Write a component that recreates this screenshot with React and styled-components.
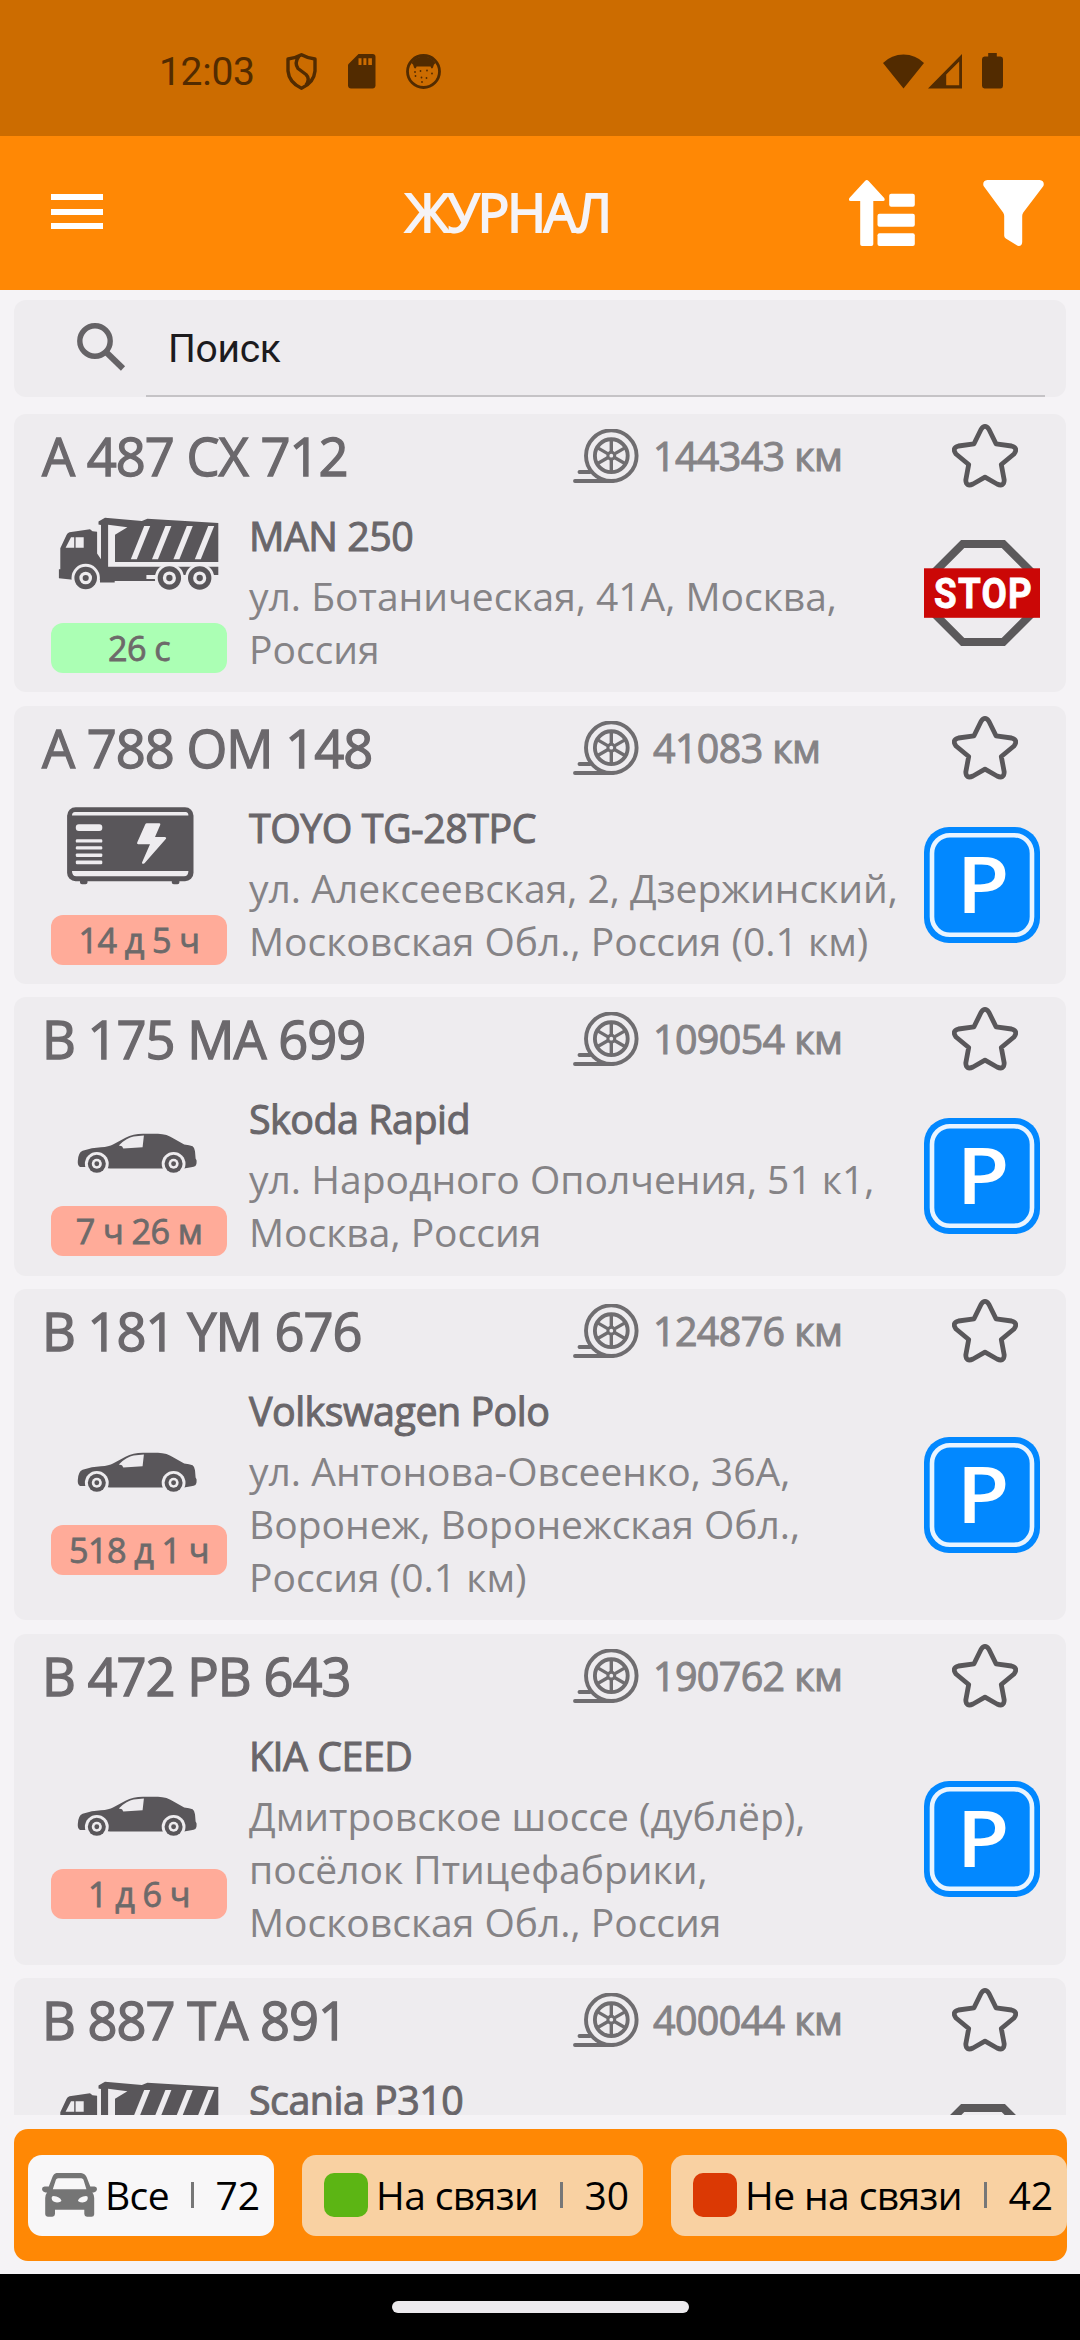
import React from 'react'
import styled, { createGlobalStyle } from 'styled-components';

const GlobalStyle = createGlobalStyle`
    * {
    box-sizing:border-box;
    }
    body {
    margin:0;
    background:#f5f3f6;
    }
`
const Screen = styled.div`
    width:1080px;
    height:2340px;
    display:flex;
    flex-direction:column;
    overflow:hidden;
    background:#f5f3f6;
    font-family:"Open Sans", sans-serif;
`
const StatusBar = styled.div`
    height:136px;
    flex:none;
    display:flex;
    align-items:center;
    padding:6px 77px 0 159px;
    background:#cc6c00;
    color:#522b00;
`
const Clock = styled.span`
    width:127px;
    font-family:Roboto, sans-serif;
    font-size:39px;
    line-height:46px;
    letter-spacing:-0.3px;
    margin-top:2px;
`
const StatusIcons = styled.div`
    display:flex;
    align-items:center;
    gap:${props => props.$gap}px;
`
const Spacer = styled.div`
    flex:1;
`
const Header = styled.div`
    height:154px;
    flex:none;
    display:grid;
    grid-template-columns:300px 1fr 231px;
    align-items:center;
    background:#ff8805;
    color:#f5f3f6;
`
const MenuButton = styled.div`
    display:flex;
    flex-direction:column;
    gap:8.5px;
    width:52px;
    margin-left:51px;
    margin-top:-3px;
`
const MenuLine = styled.div`
    height:6px;
    background:#fff;
`
const Title = styled.div`
    text-align:center;
    font-size:52.5px;
    line-height:72px;
    letter-spacing:-2.1px;
    -webkit-text-stroke:1.9px currentColor;
    padding:0 134px 2px 0;
`
const HeaderActions = styled.div`
    display:flex;
    gap:68px;
`
const SearchPanel = styled.div`
    height:97px;
    flex:none;
    display:flex;
    margin:10px 14px 17px;
    padding-right:21px;
    border-radius:12px;
    background:#eeecef;
`
const SearchIconBox = styled.div`
    width:132px;
    padding:23px 0 0 63px;
`
const SearchField = styled.div`
    flex:1;
    padding:26px 0 0 22px;
    border-bottom:2px solid #c5c3c6;
    font-family:Roboto, sans-serif;
    font-size:39px;
    line-height:46px;
    letter-spacing:-0.3px;
    color:#1c1b1e;
`
const List = styled.div`
    height:1701px;
    flex:none;
    overflow:hidden;
    margin:0 14px;
    display:flex;
    flex-direction:column;
    gap:13.6px;
`
const Card = styled.div`
    flex:none;
    padding-bottom:15px;
    border-radius:12px;
    background:#eeecef;
`
const CardTop = styled.div`
    height:84px;
    display:grid;
    grid-template-columns:531px 80px 299px 66px;
    align-items:center;
    padding-left:28px;
`
const Plate = styled.div`
    font-size:52.5px;
    line-height:72px;
    letter-spacing:-1px;
    color:#6b686c;
    -webkit-text-stroke:1.3px currentColor;
`
const Mileage = styled.div`
    font-size:39.4px;
    line-height:54px;
    letter-spacing:-0.6px;
    color:#858386;
    -webkit-text-stroke:1px currentColor;
`
const CardBody = styled.div`
    display:grid;
    grid-template-columns:176px 697px 116px;
    align-items:center;
    min-height:168px;
    margin-top:11px;
    padding-left:37px;
`
const Vehicle = styled.div`
    height:160px;
`
const VehicleSvg = styled.svg`
    display:block;
    width:176px;
    height:110px;
    fill:#59565a;
`
const Badge = styled.div`
    height:50px;
    border-radius:12px;
    background:${props => props.$online ? '#abffb4' : '#ffab99'};
    color:#6d6a6a;
    text-align:center;
    font-size:34.2px;
    line-height:49px;
    letter-spacing:-0.6px;
    -webkit-text-stroke:0.8px currentColor;
`
const Info = styled.div`
    align-self:start;
    padding:1px 0 1.3px 22px;
`
const Model = styled.div`
    margin-bottom:7px;
    font-size:39.4px;
    line-height:53px;
    letter-spacing:-0.5px;
    color:#69666a;
    -webkit-text-stroke:1px currentColor;
`
const Address = styled.div`
    white-space:pre;
    font-size:39px;
    line-height:52.9px;
    color:#858386;
`
const FilterBar = styled.div`
    height:132px;
    flex:none;
    display:flex;
    align-items:center;
    gap:28px;
    margin:14px 13px 13px 14px;
    padding-left:14px;
    border-radius:14px;
    overflow:hidden;
    background:#ff8805;
`
const Chip = styled.div`
    flex:none;
    width:${props => props.$width}px;
    height:81px;
    display:flex;
    align-items:center;
    padding:0 14px 0 ${props => props.$active ? 14 : 22}px;
    border-radius:14px;
    background:${props => props.$active ? '#f8f7f8' : '#f9d1a2'};
    color:#000;
    font-size:39px;
    line-height:54px;
`
const ChipSquare = styled.div`
    width:44px;
    height:44px;
    border-radius:10px;
    background:${props => props.$color};
`
const ChipLabel = styled.span`
    margin-left:8px;
    letter-spacing:-0.6px;
`
const ChipLine = styled.div`
    width:3px;
    height:26px;
    margin:0 auto;
    background:#777;
`
const NavBar = styled.div`
    height:67px;
    flex:none;
    display:flex;
    justify-content:center;
    padding-top:27px;
    background:#000;
`
const NavHandle = styled.div`
    width:297px;
    height:12px;
    border-radius:6px;
    background:#eceaed;
`

const PAPER = '#eeecef';

function Wheel({ x, y, r }) {
    return (
        <>
            <circle cx={x} cy={y} r={r + 2.9} fill={PAPER} />
            <circle cx={x} cy={y} r={r} />
            <circle cx={x} cy={y} r={r * 0.56} fill={PAPER} />
            <circle cx={x} cy={y} r={r * 0.27} />
        </>
    )
}

function Truck() {
    return (
        <VehicleSvg viewBox="0 0 176 110">
            <path d="M7.9 56.3h1.4V35.3L15.5 22Q16.5 19.6 18.5 19.2L39 16.3 41.5 18.2 46.1 18.7V40.5L50 46.3V12L47.5 11.5V8.5L54 4.7 90.9 8 96.4 5.7 167.3 10V49H64V21.7L76.4 14.3 57.1 11.7V53.7H167.3V62H105.7V68H63.7V69.4H49V66.7H22L7.9 65.3z" />
            <path fill={PAPER} d="M20 24.3H23.2V34.7H14.6zM24.6 24.3H32.7V34.7H24.6zM95.4 62H107V66H95.4z" />
            {[0, 21.2, 42.6, 64].map(x => (
                <path key={x} fill={PAPER} d={`M${93.2 + x} 13h6L${85.8 + x} 46.3h-6z`} />
            ))}
            <Wheel x={34.7} y={65} r={11.3} />
            <Wheel x={118.4} y={65} r={11.7} />
            <Wheel x={148.7} y={65} r={11.7} />
        </VehicleSvg>
    )
}

function Generator() {
    return (
        <VehicleSvg viewBox="0 0 176 110">
            <rect x="16.1" y="2.3" width="126.4" height="74" rx="8.5" />
            <path d="M29 76h7.5v1.5q0 1.8-2 1.8h-3.5q-2 0-2-1.8zM120.8 76h7.6v1.5q0 1.8-2 1.8h-3.6q-2 0-2-1.8z" />
            <g fill={PAPER}>
                <path d="M24 7H134.6Q137.4 7 137.4 10.6H21Q21 7 24 7zM21 66H137.4Q137.4 71.3 133 71.3H25.4Q21 71.3 21 66z" />
                <rect x="24.8" y="19.3" width="26.5" height="6.7" rx="3" />
                <rect x="24.8" y="34.3" width="26.5" height="3.3" rx="1.2" />
                <rect x="24.8" y="41.2" width="26.5" height="3.3" rx="1.2" />
                <rect x="24.8" y="48.4" width="26.5" height="3.5" rx="1.2" />
                <rect x="24.8" y="55.6" width="26.5" height="3.6" rx="1.2" />
                <path d="M95.8 18.3H108.5Q109.6 18.6 109.3 19.8L104 32H114Q115.8 32.4 115 33.8L93.5 58.2Q90.8 59.8 91 57.4L99 39.3H87.2Q85.6 39 86.2 37.6L94.3 19.3Q94.8 18.3 95.8 18.3z" />
            </g>
        </VehicleSvg>
    )
}

function Car() {
    return (
        <VehicleSvg viewBox="0 0 176 110">
            <path d="M29 71Q26.4 69.5 26.8 65 27.2 56.6 31.6 54.8 41 51.6 50 51.2 58 50.6 62 48.4L74.5 41.8Q82 37.8 92 37.8H107Q116 38 123 42.8L133.2 48.5Q138.6 49.2 141.6 50.2 143.9 52 144 55.2L144.6 62.5Q146 64.2 145.6 66 146 71.2 140.1 71.2L133 72.5H59L47 71z" />
            <path fill={PAPER} d="M67.8 49.4Q76 41.6 82.6 40.6L92.9 39.6 91.6 51.3 72.3 52.5 71 50.2z" />
            <Wheel x={45.8} y={67.8} r={9} />
            <Wheel x={122.6} y={67.8} r={9} />
        </VehicleSvg>
    )
}

function TireIcon() {
    return (
        <svg width="66" height="54" viewBox="0 0 66 54" fill="none" stroke="#6f6d70" strokeWidth="3.9" strokeLinecap="round">
            <circle cx="38.3" cy="26.7" r="25.3" />
            <circle cx="38.3" cy="26.7" r="16.4" />
            <circle cx="38.3" cy="26.7" r="3.4" strokeWidth="3" />
            {[0, 60, 120, 180, 240, 300].map(a => (
                <path key={a} strokeWidth="3.4" strokeLinecap="butt" d="M38.3 22.5V11" transform={`rotate(${a} 38.3 26.7)`} />
            ))}
            <path d="M6.5 43H17M2 52H40" />
        </svg>
    )
}

function StarIcon() {
    return (
        <svg width="66" height="64" viewBox="0 0 66 64" fill="none" stroke="#59575a" strokeWidth="4.8" strokeLinejoin="round">
            <path d="M22 19.8L29 5.5Q33-.6 37 5.5L44 19.8 59.5 22Q66.5 24 62 30L49.3 40.5 52.2 56Q52 63.2 45 60L33 53.2 21 60Q14 63.2 13.8 56L16.7 40.5 4 30Q-.5 24 6.5 22z" />
        </svg>
    )
}

function ParkingSign() {
    return (
        <svg width="116" height="116" viewBox="0 0 116 116">
            <rect width="116" height="116" rx="25" fill="#0288ff" />
            <rect x="8" y="8.2" width="100" height="99.6" rx="18" fill="none" stroke="#e9f4ff" strokeWidth="4.6" />
            <text x="32.6" y="85.5" fontFamily="Open Sans, sans-serif" fontWeight="600" fontSize="78" fill="#fff" textLength="53" lengthAdjust="spacingAndGlyphs">P</text>
        </svg>
    )
}

function StopSign() {
    return (
        <svg width="116" height="106" viewBox="0 0 116 106">
            <path d="M38.7 4H79.3L108 32.7V73.3L79.3 102H38.7L10 73.3V32.7z" fill="none" stroke="#5b595b" strokeWidth="8" />
            <rect y="28.3" width="116" height="49.5" fill="#cb0706" />
            <text x="10" y="67.6" fontFamily="Roboto, sans-serif" fontWeight="700" fontSize="43" letterSpacing="1.5" fill="#fff" stroke="#fff" strokeWidth="0.9" textLength="99" lengthAdjust="spacingAndGlyphs">STOP</text>
        </svg>
    )
}

function FrontCarIcon() {
    return (
        <svg width="55" height="44" viewBox="0 0 55 44">
            <path fill="#757575" fillRule="evenodd" d="M14.5 0H39Q43 .4 44.6 4L48.3 13.4H52.5Q55 13.8 55 16 54.8 19 51.6 19.4L50.4 19.6Q52.2 22 52.2 25V41.4Q52 43.7 49.5 43.7H45Q42.4 43.6 42.3 41V36.8H13V41Q12.8 43.6 10.3 43.7H5.8Q3.3 43.6 3.2 41.2V25Q3.2 22 5 19.6L3.6 19.4Q.2 19 0 16 0 13.8 2.6 13.4H6.8L10.4 4Q11.8.4 14.5 0zM16 5.2Q14.6 5.3 14 6.6L10.8 16.3H44.4L41.4 6.6Q40.8 5.3 39.4 5.2zM11.5 23Q9.6 23 9.6 25 10 29.4 15 29.4 19.4 29.4 19.4 27.6 18 23.6 11.5 23zM44 23Q46 23 45.8 25 45.4 29.4 40.5 29.4 36 29.4 36 27.6 37.4 23.6 44 23z" />
        </svg>
    )
}

const vehicles = [
    { plate: 'А 487 СХ 712', km: '144343 км', icon: Truck, time: '26 с', online: true, model: 'MAN 250', address: 'ул. Ботаническая, 41А, Москва,\nРоссия', sign: StopSign },
    { plate: 'А 788 ОМ 148', km: '41083 км', icon: Generator, time: '14 д 5 ч', model: 'TOYO TG-28TPC', address: 'ул. Алексеевская, 2, Дзержинский,\nМосковская Обл., Россия (0.1 км)', sign: ParkingSign },
    { plate: 'В 175 МА 699', km: '109054 км', icon: Car, time: '7 ч 26 м', model: 'Skoda Rapid', address: 'ул. Народного Ополчения, 51 к1,\nМосква, Россия', sign: ParkingSign },
    { plate: 'В 181 YM 676', km: '124876 км', icon: Car, time: '518 д 1 ч', model: 'Volkswagen Polo', address: 'ул. Антонова-Овсеенко, 36А,\nВоронеж, Воронежская Обл.,\nРоссия (0.1 км)', sign: ParkingSign },
    { plate: 'В 472 РВ 643', km: '190762 км', icon: Car, time: '1 д 6 ч', model: 'KIA CEED', address: 'Дмитровское шоссе (дублёр),\nпосёлок Птицефабрики,\nМосковская Обл., Россия', sign: ParkingSign },
    { plate: 'В 887 ТА 891', km: '400044 км', icon: Truck, model: 'Scania P310', sign: StopSign },
]

function VehicleCard({ item }) {
    const Icon = item.icon
    const Sign = item.sign
    return (
        <Card>
            <CardTop>
                <Plate>{item.plate}</Plate>
                <TireIcon />
                <Mileage>{item.km}</Mileage>
                <StarIcon />
            </CardTop>
            <CardBody>
                <Vehicle>
                    <Icon />
                    {item.time && <Badge $online={item.online}>{item.time}</Badge>}
                </Vehicle>
                <Info>
                    <Model>{item.model}</Model>
                    {item.address && <Address>{item.address}</Address>}
                </Info>
                <Sign />
            </CardBody>
        </Card>
    )
}

export default function App() {
    return (
        <Screen>
            <GlobalStyle />
            <StatusBar>
                <Clock>12:03</Clock>
                <StatusIcons $gap={30.7}>
                    <svg width="31" height="37" viewBox="0 0 31 37" fill="none" stroke="#522b00" strokeWidth="3.4" strokeLinejoin="round">
                        <path d="M15.5 1.8Q22 5.4 29 6V18Q28 29.5 15.5 35.2 3 29.5 2 18V6Q9 5.4 15.5 1.8z" />
                        <path d="M13 3Q8 10 12 15.5L20 21.5Q24.5 26 20 32" />
                    </svg>
                    <svg width="28" height="35" viewBox="0 0 28 35">
                        <path fill="#522b00" d="M10.5 0H24.5Q27.5.2 27.5 3V31.5Q27.3 34.4 24.5 34.5H3Q.2 34.3 0 31.5V10.5z" />
                        <path fill="#cc6c00" d="M10.5 4.3h3V11h-3zM15.4 4.3h3V11h-3zM20.3 4.3h3.6V11h-3.6z" />
                    </svg>
                    <svg width="35" height="35" viewBox="0 0 35 35">
                        <circle cx="17.5" cy="17.5" r="16" fill="none" stroke="#522b00" strokeWidth="2.8" />
                        <path fill="#522b00" d="M5.5 9Q10 2.5 17.5 2.5T29.5 9Q27.5 10 27 13.5 25.5 16 24.6 12.4H10.6Q9.6 16 8 13.5 7.5 10 5.5 9z" />
                        <g fill="#522b00">
                            <circle cx="9" cy="18" r=".9" />
                            <circle cx="14.5" cy="17" r=".9" />
                            <circle cx="21" cy="16.5" r=".9" />
                            <circle cx="9.5" cy="22" r=".9" />
                            <circle cx="15.5" cy="23.5" r=".9" />
                            <circle cx="20.5" cy="24" r=".9" />
                            <circle cx="26" cy="19.5" r=".9" />
                            <circle cx="16" cy="28" r=".9" />
                        </g>
                    </svg>
                </StatusIcons>
                <Spacer />
                <StatusIcons $gap={4}>
                    <svg width="41" height="35" viewBox="0 0 41 35" fill="#522b00">
                        <path d="M0 9Q8.5.5 20.5.5T41 9L20.5 34.5z" />
                    </svg>
                    <svg width="50" height="35" viewBox="0 0 50 35" fill="#522b00">
                        <path fillRule="evenodd" d="M34 0V34.5H0zM31.2 7.5L18.2 20.5V31.3H31.2z" />
                    </svg>
                    <svg width="21" height="36" viewBox="0 0 21 36" fill="#522b00">
                        <path d="M6.2 0H14.8V3.6H18.5Q21 3.8 21 6V33Q20.8 35.5 18.5 35.5H2.5Q.2 35.3 0 33V6Q.2 3.8 2.5 3.6H6.2z" />
                    </svg>
                </StatusIcons>
            </StatusBar>
            <Header>
                <MenuButton>
                    <MenuLine />
                    <MenuLine />
                    <MenuLine />
                </MenuButton>
                <Title>ЖУРНАЛ</Title>
                <HeaderActions>
                    <svg width="66" height="66" viewBox="0 0 66 66" fill="#fff">
                        <path d="M16 1Q17.8-.8 19.6 1L35.2 18Q36.6 20.8 34 21H24.3V64.2Q24.2 66 22.5 66H13Q11.3 66 11.2 64.2V21H1.6Q-1 20.8.4 18z" />
                        <rect x="40.2" y="13.7" width="25.6" height="13" rx="2" />
                        <rect x="28.5" y="33.7" width="37.3" height="13" rx="2" />
                        <rect x="28.5" y="53.3" width="37.3" height="12.7" rx="2" />
                    </svg>
                    <svg width="61" height="66" viewBox="0 0 61 66" fill="#fff">
                        <path d="M4.4 0H56.6Q62 1 60.4 6L40.3 32.5Q39.2 34 39.2 36V62Q39 66.6 34.6 65.8L22.8 58.6Q21.2 57.4 21.2 55.8V36Q21.2 34 20.1 32.5L.6 6Q-1 1 4.4 0z" />
                    </svg>
                </HeaderActions>
            </Header>
            <SearchPanel>
                <SearchIconBox>
                    <svg width="49" height="48" viewBox="0 0 49 48" fill="none" stroke="#656366">
                        <circle cx="18" cy="18" r="15.2" strokeWidth="5.4" />
                        <path d="M29 29L46 45.5" strokeWidth="6" />
                    </svg>
                </SearchIconBox>
                <SearchField>Поиск</SearchField>
            </SearchPanel>
            <List>
                {vehicles.map(item => <VehicleCard key={item.plate} item={item} />)}
            </List>
            <FilterBar>
                <Chip $width={246} $active>
                    <FrontCarIcon />
                    <ChipLabel>Все</ChipLabel>
                    <ChipLine />
                    <span>72</span>
                </Chip>
                <Chip $width={341}>
                    <ChipSquare $color="#5cb514" />
                    <ChipLabel>На связи</ChipLabel>
                    <ChipLine />
                    <span>30</span>
                </Chip>
                <Chip $width={396}>
                    <ChipSquare $color="#db3904" />
                    <ChipLabel>Не на связи</ChipLabel>
                    <ChipLine />
                    <span>42</span>
                </Chip>
            </FilterBar>
            <NavBar>
                <NavHandle />
            </NavBar>
        </Screen>
    )
}
